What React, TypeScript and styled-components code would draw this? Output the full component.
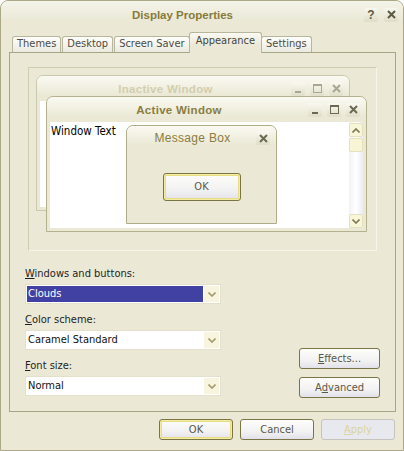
import React from "react";
import styled, { createGlobalStyle, css } from "styled-components";

const UI_FONT = `"DejaVu Sans Condensed", "DejaVu Sans", sans-serif`;
const CAPTION_FONT = `"Liberation Sans", Arial, sans-serif`;

const GlobalStyle = createGlobalStyle`
  html, body {
    margin: 0;
    padding: 0;
    background: #ffffff;
  }
  body {
    font-family: ${UI_FONT};
    font-size: 11px;
  }
`;

const TABS = ["Themes", "Desktop", "Screen Saver", "Appearance", "Settings"];

function CloseIcon({ color = "#5c5a45" }: { color?: string }) {
  return (
    <svg width="9" height="9" viewBox="0 0 9 9">
      <path d="M1 1 L8 8 M8 1 L1 8" stroke={color} strokeWidth="2" />
    </svg>
  );
}

function MinimizeIcon({ color }: { color: string }) {
  return (
    <svg width="8" height="8" viewBox="0 0 8 8">
      <rect x="1" y="6" width="6" height="2" fill={color} />
    </svg>
  );
}

function MaximizeIcon({ color }: { color: string }) {
  return (
    <svg width="9" height="9" viewBox="0 0 9 9">
      <rect x="0.5" y="0.5" width="8" height="8" fill="none" stroke={color} />
      <rect x="0" y="0" width="9" height="2" fill={color} />
    </svg>
  );
}

function Chevron({ up, color }: { up?: boolean; color: string }) {
  return (
    <svg width="8" height="5" viewBox="0 0 8 5">
      <path
        d={up ? "M0.5 4.5 L4 1 L7.5 4.5" : "M0.5 0.5 L4 4 L7.5 0.5"}
        fill="none"
        stroke={color}
        strokeWidth="1.6"
      />
    </svg>
  );
}

function Dropdown({ value, selected }: { value: string; selected?: boolean }) {
  return (
    <Select>
      <SelectValue $selected={selected}>{value}</SelectValue>
      <DropButton>
        <Chevron color="#a29c69" />
      </DropButton>
    </Select>
  );
}

function PreviewButtons({ glyph }: { glyph: string }) {
  return (
    <MiniButtons>
      <MiniButton>
        <MinimizeIcon color={glyph} />
      </MiniButton>
      <MiniButton>
        <MaximizeIcon color={glyph} />
      </MiniButton>
      <MiniButton>
        <CloseIcon color={glyph} />
      </MiniButton>
    </MiniButtons>
  );
}

export default function App() {
  return (
    <>
      <GlobalStyle />
      <Dialog>
        <TitleBar>
          <Caption>Display Properties</Caption>
          <CaptionButtons>
            <CaptionButton>
              <HelpGlyph>?</HelpGlyph>
            </CaptionButton>
            <CaptionButton>
              <CloseIcon />
            </CaptionButton>
          </CaptionButtons>
        </TitleBar>

        <TabStrip>
          {TABS.map((t) => (
            <Tab key={t} $active={t === "Appearance"}>
              {t}
            </Tab>
          ))}
        </TabStrip>

        <Panel>
          <Preview>
            <InactiveWindow>
              <WinTitle>
                <WinCaption $inactive>Inactive Window</WinCaption>
                <PreviewButtons glyph="#a9a78f" />
              </WinTitle>
              <WinBody />
            </InactiveWindow>

            <ActiveWindow>
              <WinTitle>
                <WinCaption>Active Window</WinCaption>
                <PreviewButtons glyph="#6b6952" />
              </WinTitle>
              <WinBody>
                <WindowText>Window Text</WindowText>
                <ScrollBar>
                  <ScrollButton>
                    <Chevron up color="#7c7955" />
                  </ScrollButton>
                  <ScrollThumb />
                  <ScrollTrack />
                  <ScrollButton>
                    <Chevron color="#7c7955" />
                  </ScrollButton>
                </ScrollBar>
              </WinBody>
            </ActiveWindow>

            <MessageBox>
              <MessageTitle>
                <WinCaption $light>Message Box</WinCaption>
                <MiniButtons>
                  <MiniButton>
                    <CloseIcon color="#6b6952" />
                  </MiniButton>
                </MiniButtons>
              </MessageTitle>
              <MessageBody>
                <PushButton $default $width={78} $height={28}>
                  OK
                </PushButton>
              </MessageBody>
            </MessageBox>
          </Preview>

          <Form>
            <Fields>
              <Field>
                <Label>
                  <u>W</u>indows and buttons:
                </Label>
                <Dropdown value="Clouds" selected />
              </Field>
              <Field>
                <Label>
                  <u>C</u>olor scheme:
                </Label>
                <Dropdown value="Caramel Standard" />
              </Field>
              <Field>
                <Label>
                  <u>F</u>ont size:
                </Label>
                <Dropdown value="Normal" />
              </Field>
            </Fields>
            <SideButtons>
              <PushButton $width={81}>
                <u>E</u>ffects...
              </PushButton>
              <PushButton $width={81}>
                A<u>d</u>vanced
              </PushButton>
            </SideButtons>
          </Form>
        </Panel>

        <Footer>
          <PushButton $default>OK</PushButton>
          <PushButton>Cancel</PushButton>
          <PushButton $disabled>
            <u>A</u>pply
          </PushButton>
        </Footer>
      </Dialog>
    </>
  );
}

const Dialog = styled.div`
  box-sizing: border-box;
  width: 404px;
  height: 451px;
  border: 1px solid #aaa885;
  border-radius: 8px 8px 0 0;
  background: #ebe9d6;
  overflow: hidden;
  display: flex;
  flex-direction: column;
`;

const TitleBar = styled.div`
  display: flex;
  align-items: center;
  height: 27px;
  flex-shrink: 0;
  padding: 0 5px 0 0;
  background: linear-gradient(#f4f3e9, #ebe9d6 70%);
`;

const Caption = styled.div`
  flex: 1;
  text-align: center;
  font-family: ${CAPTION_FONT};
  font-size: 11.5px;
  font-weight: bold;
  color: #877b3a;
  padding-top: 1px;
`;

const CaptionButtons = styled.div`
  display: flex;
  gap: 6px;
`;

const CaptionButton = styled.div`
  width: 14px;
  height: 14px;
  border-radius: 2px;
  background: linear-gradient(#f8f7ef, #dfddc6);
  display: flex;
  align-items: center;
  justify-content: center;
`;

const HelpGlyph = styled.span`
  font-family: ${CAPTION_FONT};
  font-weight: bold;
  font-size: 12px;
  line-height: 12px;
  color: #5c5a45;
`;

const TabStrip = styled.div`
  display: flex;
  align-items: flex-end;
  height: 24px;
  flex-shrink: 0;
  padding-left: 11px;
`;

const Tab = styled.div<{ $active?: boolean }>`
  box-sizing: border-box;
  height: 16px;
  padding: 0 4px;
  margin-right: 1px;
  border: 1px solid #b8b69d;
  border-bottom: none;
  border-radius: 3px 3px 0 0;
  background: linear-gradient(#fefefc, #ebeae0);
  color: #4d4c43;
  line-height: 14px;
  white-space: nowrap;
  ${({ $active }) =>
    $active &&
    css`
      position: relative;
      z-index: 1;
      height: 21px;
      margin: 0 -1px -1px -2px;
      padding: 1px 6px 0;
      background: linear-gradient(#fbfaf4, #ebe9d6 60%);
      color: #45443c;
    `}
`;

const Panel = styled.div`
  box-sizing: border-box;
  width: 387px;
  height: 360px;
  margin-left: 8px;
  border: 1px solid #a7a583;
  padding: 14px 15px 0;
  display: flex;
  flex-direction: column;
`;

const Preview = styled.div`
  position: relative;
  box-sizing: border-box;
  height: 184px;
  margin: 0 3px;
  border: 1px solid #cfcdb1;
  border-right-color: #f6f5ec;
  border-bottom-color: #f6f5ec;
`;

const PreviewFrame = styled.div`
  position: absolute;
  box-sizing: border-box;
  display: flex;
  flex-direction: column;
  border: 1px solid #b3b190;
  border-radius: 7px 7px 0 0;
  background: #ebe9d6;
  padding: 0 3px 3px;
`;

const InactiveWindow = styled(PreviewFrame)`
  left: 7px;
  top: 7px;
  width: 314px;
  height: 136px;
  border-color: #cbc9ad;
`;

const ActiveWindow = styled(PreviewFrame)`
  left: 17px;
  top: 28px;
  width: 321px;
  height: 136px;
`;

const MessageBox = styled(PreviewFrame)`
  left: 97px;
  top: 57px;
  width: 151px;
  height: 99px;
  padding: 0;
  border-color: #aeac89;
`;

const WinTitle = styled.div`
  display: flex;
  align-items: center;
  height: 25px;
  flex-shrink: 0;
  margin: 0 -3px;
  padding: 0 6px 0 3px;
  border-radius: 6px 6px 0 0;
  background: linear-gradient(#fbfaf3, #ebe9d6 75%);
`;

const MessageTitle = styled(WinTitle)`
  height: 24px;
  margin: 0;
  padding: 0 6px 0 2px;
`;

const WinCaption = styled.div<{ $inactive?: boolean; $light?: boolean }>`
  flex: 1;
  text-align: center;
  font-family: ${CAPTION_FONT};
  font-weight: ${({ $light }) => ($light ? "normal" : "bold")};
  font-size: ${({ $light }) => ($light ? "12px" : "11.5px")};
  letter-spacing: 0.3px;
  color: ${({ $inactive }) => ($inactive ? "#d2ceae" : "#8a7d3e")};
`;

const MiniButtons = styled.div`
  display: flex;
  gap: 5px;
`;

const MiniButton = styled.div`
  width: 14px;
  height: 14px;
  border-radius: 2px;
  background: linear-gradient(#faf9f1, #e0dec8);
  display: flex;
  align-items: center;
  justify-content: center;
`;

const WinBody = styled.div`
  flex: 1;
  display: flex;
  background: #ffffff;
`;

const WindowText = styled.div`
  flex: 1;
  padding: 2px 0 0 1px;
  color: #000000;
  font-size: 11.5px;
`;

const ScrollBar = styled.div`
  width: 14px;
  display: flex;
  flex-direction: column;
  background: linear-gradient(90deg, #f3f2f7, #ffffff 50%, #ecebf2);
`;

const ScrollButton = styled.div`
  box-sizing: border-box;
  height: 14px;
  margin-top: 1px;
  border: 1px solid #e4e1bd;
  border-radius: 2px;
  background: #f8f6d8;
  display: flex;
  align-items: center;
  justify-content: center;
`;

const ScrollThumb = styled(ScrollButton)`
  background: #f7f5d6;
`;

const ScrollTrack = styled.div`
  flex: 1;
`;

const MessageBody = styled.div`
  flex: 1;
  display: flex;
  align-items: center;
  justify-content: center;
`;

const PushButton = styled.div<{
  $default?: boolean;
  $disabled?: boolean;
  $width?: number;
  $height?: number;
}>`
  box-sizing: border-box;
  width: ${({ $width }) => $width ?? 74}px;
  height: ${({ $height }) => $height ?? 21}px;
  border: 1px solid #7a7545;
  border-radius: 3px;
  background: linear-gradient(#fdfdfb, #f3f2f2 60%, #e2e1ea);
  color: #5a5844;
  display: flex;
  align-items: center;
  justify-content: center;
  ${({ $default }) =>
    $default &&
    css`
      box-shadow: inset 0 0 0 1px #f3eca2, inset 0 0 0 2px #e6dd85;
    `}
  ${({ $disabled }) =>
    $disabled &&
    css`
      border-color: #c6c4bc;
      background: #e8e8ef;
      color: #dbd49c;
    `}
`;

const Form = styled.div`
  display: flex;
  justify-content: space-between;
  align-items: flex-end;
  margin-top: 16px;
`;

const Fields = styled.div`
  width: 196px;
  display: flex;
  flex-direction: column;
  gap: 9px;
`;

const Field = styled.div`
  display: flex;
  flex-direction: column;
  gap: 4px;
`;

const Label = styled.div`
  line-height: 13px;
  color: #1e1e1e;
`;

const Select = styled.div`
  box-sizing: border-box;
  height: 20px;
  border: 1px solid #e3e1cc;
  background: #ffffff;
  padding: 1px;
  display: flex;
  gap: 1px;
`;

const SelectValue = styled.div<{ $selected?: boolean }>`
  flex: 1;
  padding-left: 1px;
  line-height: 16px;
  color: #111111;
  ${({ $selected }) =>
    $selected &&
    css`
      background: #4141a3;
      color: #ffffff;
    `}
`;

const DropButton = styled.div`
  width: 15px;
  background: #f7f5df;
  display: flex;
  align-items: center;
  justify-content: center;
`;

const SideButtons = styled.div`
  display: flex;
  flex-direction: column;
  gap: 8px;
  margin-bottom: -2px;
`;

const Footer = styled.div`
  display: flex;
  justify-content: flex-end;
  gap: 7px;
  padding: 7px 8px 0 0;
`;
